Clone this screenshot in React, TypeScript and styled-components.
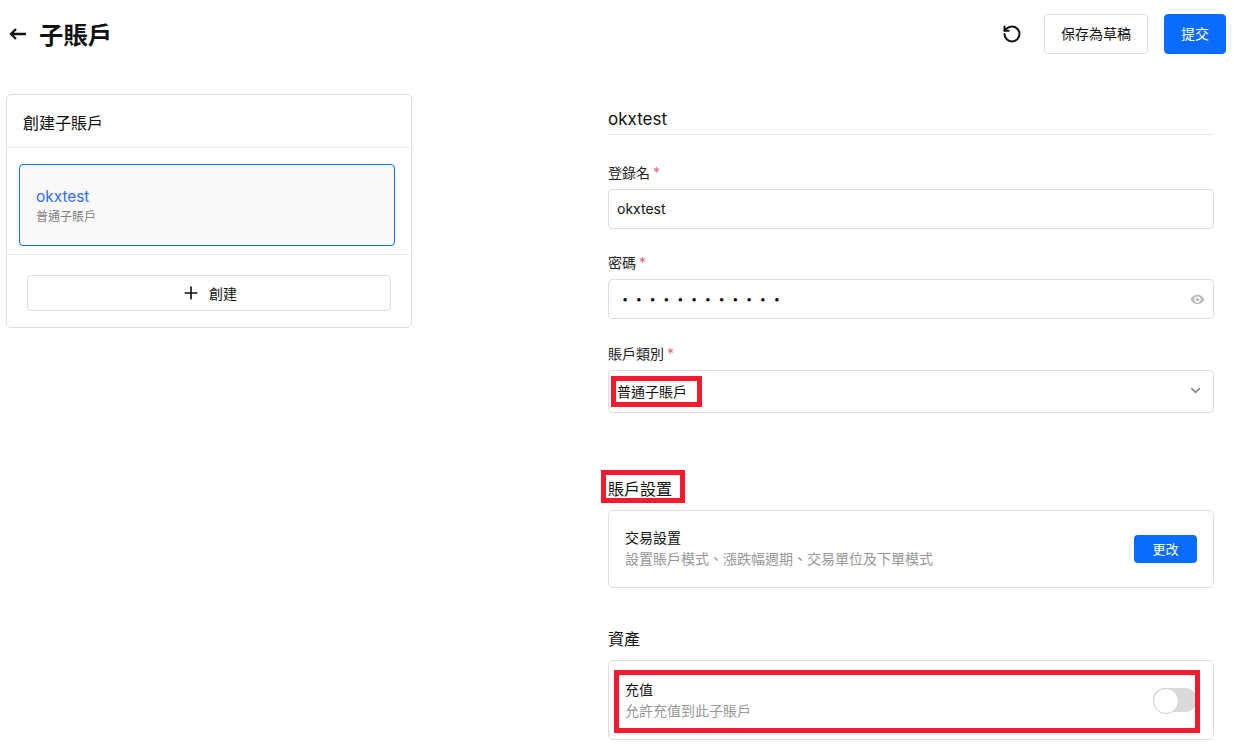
import React from 'react';
import styled, { createGlobalStyle } from 'styled-components';
import { ChevronDown, Plus, RotateCcw } from 'lucide-react';

const FONT = `Inter, "Noto Sans CJK TC", "Noto Sans CJK SC", sans-serif`;
const BLUE = '#0a6cff';
const LINE = '#dedede';

const GlobalStyle = createGlobalStyle`
  html, body {
    margin: 0;
    height: 750px;
    overflow: hidden;
    background: #fff;
    font-family: ${FONT};
    color: #111;
  }
  * { box-sizing: border-box; }
`;

const Page = styled.div`
  padding: 14px 8px 0 6px;
`;
const Header = styled.header`
  display: flex;
  align-items: center;
  height: 40px;
  padding-left: 2px;
`;
const BackButton = styled.span`
  display: flex;
  width: 32px;
`;
const Title = styled.h1`
  margin: 0 0 2px -1px;
  font-size: 24.4px;
  font-weight: 700;
  flex: 1;
`;
const ResetIcon = styled.span`
  display: flex;
  margin-right: 22px;
`;
const Button = styled.button<{ $primary?: boolean }>`
  height: 40px;
  padding: 0 16px 2px;
  border-radius: 4px;
  border: 1px solid ${(p) => (p.$primary ? BLUE : LINE)};
  background: ${(p) => (p.$primary ? BLUE : '#fff')};
  color: ${(p) => (p.$primary ? '#fff' : '#111')};
  font-family: ${FONT};
  font-size: 14px;
  margin-left: ${(p) => (p.$primary ? '16px' : '0')};
`;
const Columns = styled.div`
  display: grid;
  grid-template-columns: 406px 606px;
  column-gap: 196px;
  margin-top: 40px;
`;
const SideCard = styled.aside`
  height: 234px;
  border: 1px solid ${LINE};
  border-radius: 5px;
`;
const SideTitle = styled.div`
  height: 53px;
  padding: 2px 0 0 16px;
  display: flex;
  align-items: center;
  font-size: 16px;
  border-bottom: 1px solid #ececec;
`;
const SideList = styled.div`
  padding: 16px 16px 8px 12px;
  border-bottom: 1px solid #ececec;
`;
const SubItem = styled.div`
  height: 82px;
  padding: 1px 0 0 16px;
  display: flex;
  flex-direction: column;
  justify-content: center;
  border: 1px solid ${BLUE};
  border-radius: 4px;
  background: #f9f9f9;
`;
const SubName = styled.div`
  font-size: 15.4px;
  line-height: 22px;
  color: #2f6bff;
`;
const SubType = styled.div`
  font-size: 12px;
  line-height: 18px;
  color: #808080;
`;
const SideFooter = styled.div`
  padding: 20px 20px 0;
`;
const CreateButton = styled.button`
  width: 100%;
  height: 36px;
  padding-bottom: 2px;
  display: flex;
  align-items: center;
  justify-content: center;
  gap: 8px;
  background: #fff;
  border: 1px solid ${LINE};
  border-radius: 4px;
  font-family: ${FONT};
  font-size: 14px;
  color: #111;
`;
const Main = styled.main`
  padding-top: 14px;
`;
const AccountName = styled.div`
  height: 27px;
  font-size: 17px;
  line-height: 22px;
  border-bottom: 1px solid #ececec;
  margin-bottom: 27px;
`;
const Label = styled.label`
  display: block;
  font-size: 14px;
  line-height: 22px;
  color: #222;
  margin-bottom: 5px;
  span {
    color: #e6627a;
    margin-left: -1px;
  }
`;
const Field = styled.div<{ $gap?: number; $tall?: boolean }>`
  position: relative;
  display: flex;
  align-items: center;
  justify-content: space-between;
  height: ${(p) => (p.$tall ? '43px' : '40px')};
  padding: 0 9px 2px 8px;
  border: 1px solid ${LINE};
  border-radius: 4px;
  font-size: 14px;
  margin-bottom: ${(p) => p.$gap ?? 0}px;
`;
const Mask = styled.span`
  font-size: 11px;
  letter-spacing: 7.6px;
  padding: 2px 0 0 5px;
`;
const Eye = styled.svg`
  margin: 2px -1px 0 0;
`;
const Chevron = styled(ChevronDown)`
  margin-right: 1px;
`;
const SectionTitle = styled.h2<{ $top: number }>`
  position: relative;
  margin: ${(p) => p.$top}px 0 10px;
  font-size: 16px;
  font-weight: 400;
  line-height: 22px;
`;
const Panel = styled.div<{ $height: number }>`
  position: relative;
  display: flex;
  align-items: center;
  justify-content: space-between;
  height: ${(p) => p.$height}px;
  padding: 0 16px;
  border: 1px solid ${LINE};
  border-radius: 5px;
`;
const DepositInfo = styled.div`
  padding-top: 2px;
`;
const PanelName = styled.div`
  font-size: 14px;
  line-height: 20px;
`;
const PanelHint = styled.div`
  font-size: 14px;
  line-height: 22px;
  color: #979797;
`;
const ChangeButton = styled.button`
  width: 63px;
  height: 28px;
  padding: 0 0 2px;
  border: 0;
  border-radius: 4px;
  background: ${BLUE};
  color: #fff;
  font-family: ${FONT};
  font-size: 13px;
`;
const Toggle = styled.span`
  position: relative;
  width: 44px;
  height: 24px;
  border-radius: 12px;
  background: #d9d9d9;
  &::after {
    content: '';
    position: absolute;
    left: 0;
    top: 0;
    width: 24px;
    height: 24px;
    border-radius: 50%;
    border: 1px solid #cfcfcf;
    background: #fff;
  }
`;
/* red annotation boxes drawn over the screenshot */
const Marker = styled.i<{ $l: number; $t: number; $w: number; $h: number }>`
  position: absolute;
  left: ${(p) => p.$l}px;
  top: ${(p) => p.$t}px;
  width: ${(p) => p.$w}px;
  height: ${(p) => p.$h}px;
  border: 5px solid #ee1c2e;
  pointer-events: none;
`;

const BackArrow = () => (
  <svg width="20" height="20" viewBox="0 0 20 20" fill="none" stroke="#111" strokeWidth="2.3">
    <path d="M18 10H3M8 5l-5 5 5 5" />
  </svg>
);

const EyeIcon = () => (
  <Eye width="15" height="15" viewBox="0 0 24 24" fill="#bdbdbd">
    <path d="M12 4.500C7 4.500 2.700 7.600 1 12c1.700 4.400 6 7.500 11 7.500s9.300-3.100 11-7.500c-1.700-4.400-6-7.500-11-7.500Zm0 12.500a5 5 0 1 1 0-10 5 5 0 0 1 0 10Zm0-8a3 3 0 1 0 0 6 3 3 0 0 0 0-6Z" />
  </Eye>
);

const App: React.FC = () => (
  <Page>
    <GlobalStyle />
    <Header>
      <BackButton>
        <BackArrow />
      </BackButton>
      <Title>子賬戶</Title>
      <ResetIcon>
        <RotateCcw size={20} strokeWidth={2.4} color="#111" />
      </ResetIcon>
      <Button>保存為草稿</Button>
      <Button $primary>提交</Button>
    </Header>
    <Columns>
      <SideCard>
        <SideTitle>創建子賬戶</SideTitle>
        <SideList>
          <SubItem>
            <SubName>okxtest</SubName>
            <SubType>普通子賬戶</SubType>
          </SubItem>
        </SideList>
        <SideFooter>
          <CreateButton>
            <Plus size={20} strokeWidth={2} />
            創建
          </CreateButton>
        </SideFooter>
      </SideCard>
      <Main>
        <AccountName>okxtest</AccountName>
        <Label>
          登錄名 <span>*</span>
        </Label>
        <Field $gap={23}>okxtest</Field>
        <Label>
          密碼 <span>*</span>
        </Label>
        <Field $gap={24}>
          <Mask>••••••••••••</Mask>
          <EyeIcon />
        </Field>
        <Label>
          賬戶類別 <span>*</span>
        </Label>
        <Field $tall>
          普通子賬戶
          <Chevron size={15} strokeWidth={2.6} color="#888" />
          <Marker $l={2} $t={5} $w={91} $h={31} />
        </Field>
        <SectionTitle $top={65}>
          賬戶設置
          <Marker $l={-7} $t={-8} $w={84} $h={33} />
        </SectionTitle>
        <Panel $height={78}>
          <div>
            <PanelName>交易設置</PanelName>
            <PanelHint>設置賬戶模式、漲跌幅週期、交易單位及下單模式</PanelHint>
          </div>
          <ChangeButton>更改</ChangeButton>
        </Panel>
        <SectionTitle $top={40}>資產</SectionTitle>
        <Panel $height={80}>
          <DepositInfo>
            <PanelName>充值</PanelName>
            <PanelHint>允許充值到此子賬戶</PanelHint>
          </DepositInfo>
          <Toggle />
          <Marker $l={5} $t={9} $w={586} $h={63} />
        </Panel>
      </Main>
    </Columns>
  </Page>
);

export default App;
